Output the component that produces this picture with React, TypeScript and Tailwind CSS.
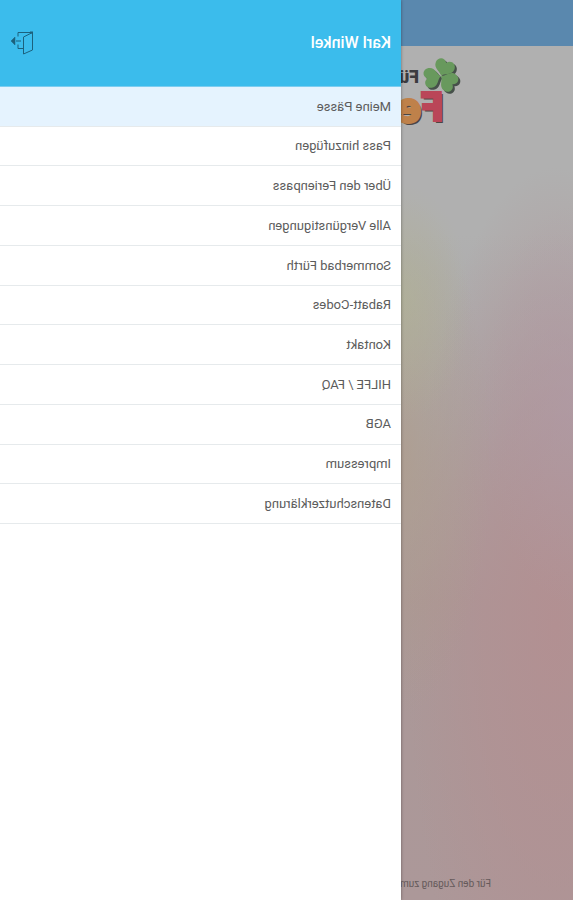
const menuItems = [
  { label: 'Meine Pässe', href: '#paesse' },
  { label: 'Pass hinzufügen', href: '#hinzufuegen' },
  { label: 'Über den Ferienpass', href: '#ferienpass' },
  { label: 'Alle Vergünstigungen', href: '#verguenstigungen' },
  { label: 'Sommerbad Fürth', href: '#sommerbad' },
  { label: 'Rabatt-Codes', href: '#rabatt' },
  { label: 'Kontakt', href: '#kontakt' },
  { label: 'HILFE / FAQ', href: '#hilfe' },
  { label: 'AGB', href: '#agb' },
  { label: 'Impressum', href: '#impressum' },
  { label: 'Datenschutzerklärung', href: '#datenschutz' },
];

const leaf = 'M0 0C-2 -4 -10 -4 -10 -11C-10 -17 -3 -19 0 -14C3 -19 10 -17 10 -11C10 -4 2 -4 0 0Z';

function Leaves() {
  return (
    <>
      <path d={leaf} transform="rotate(-22)" />
      <path d={leaf} transform="rotate(100)" />
      <path d={leaf} transform="rotate(-126)" />
    </>
  );
}

function Clover() {
  return (
    <svg viewBox="0 0 38 38" className="h-[38px] w-[38px] shrink-0 overflow-visible" aria-hidden="true">
      <g fill="#46504a" transform="translate(18 20)">
        <Leaves />
      </g>
      <g fill="#68995d" transform="translate(20 18)">
        <Leaves />
      </g>
    </svg>
  );
}

function LogoutIcon() {
  return (
    <svg viewBox="0 0 24 24" className="h-6 w-6" fill="none" stroke="#1c617d" strokeWidth="1" aria-hidden="true">
      <path d="M1.5 1.5L10.5 6V23L1.5 19Z" />
      <path d="M1.5 1.5H16M16 1.5V5.5M10.5 17.5H16V13.5" />
      <path d="M13 10H18" />
      <path d="M19 6L23 10L19 14Z" fill="#1c617d" strokeWidth="0.5" />
      <path d="M1 1.5H4" strokeWidth="2" />
    </svg>
  );
}

export default function App() {
  return (
    <div className="flex min-h-screen -scale-x-100 overflow-hidden bg-white font-['Roboto',sans-serif]">
      {/* Seite hinter dem Menü */}
      <main className="flex min-w-0 flex-1 flex-col overflow-hidden bg-[#b0b0b0]">
        <div className="h-[46px] shrink-0 bg-[#5a88ae]" />
        <div className="flex flex-1 flex-col bg-[radial-gradient(ellipse_70px_120px_at_100%_30%,#b0b49499,transparent),radial-gradient(ellipse_90px_260px_at_100%_48%,#b09c88aa,transparent),radial-gradient(ellipse_90px_200px_at_0%_42%,#b09aa699,transparent),radial-gradient(ellipse_150px_460px_at_10%_68%,#b29092,#b2909299_50%,transparent),linear-gradient(180deg,#b0b0b0_0%,#b0b0b0_22%,#aaa5a8_45%,#aa9898_65%,#ac9899_100%)]">
          <div className="flex flex-col pt-3">
            <div className="flex h-8 gap-1 pl-[112px]">
              <Clover />
              <span className="text-lg leading-[38px] font-black text-[#3b3b3f]">Fü</span>
            </div>
            <div className="flex pl-[130px] text-[40px] leading-9 font-black whitespace-nowrap text-[#ba4658] [-webkit-text-stroke:2px_#ba4658] [text-shadow:-2px_2px_0_#4c4644]">
              F<span className="text-[44px] text-[#bf814a] [-webkit-text-stroke:2px_#bf814a]">e</span>
            </div>
          </div>
          <p className="mt-auto pb-2 pl-[82px] text-[10px] leading-4 whitespace-nowrap text-[#655a5b]">
            Für den Zugang zum
          </p>
        </div>
      </main>

      {/* Menü */}
      <aside className="flex w-[70%] flex-col bg-white shadow-[0_0_3px_#00000066]">
        <header className="flex h-[87px] items-center justify-between border-b border-[#7ccdf0] bg-[#3bbcec] px-[10px]">
          <h1 className="text-base font-medium text-white">Karl Winkel</h1>
          <button type="button" aria-label="Abmelden">
            <LogoutIcon />
          </button>
        </header>
        <nav>
          <ul className="flex h-[437px] flex-col">
            {menuItems.map((item, i) => (
              <li key={item.label} className="flex-1 border-b border-[#e6eaec]">
                <a
                  href={item.href}
                  className={`flex h-full items-center px-[10px] text-[13px] text-[#5c5c5c] ${i === 0 ? 'bg-[#e5f3fe]' : ''}`}
                >
                  {item.label}
                </a>
              </li>
            ))}
          </ul>
        </nav>
      </aside>
    </div>
  );
}
